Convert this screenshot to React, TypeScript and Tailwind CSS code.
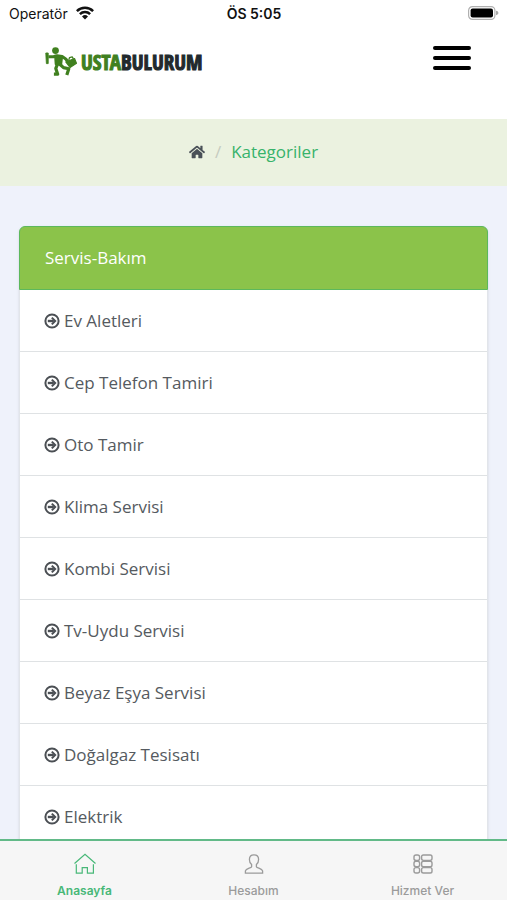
import { FaHome } from "react-icons/fa";

const categories = [
  "Ev Aletleri",
  "Cep Telefon Tamiri",
  "Oto Tamir",
  "Klima Servisi",
  "Kombi Servisi",
  "Tv-Uydu Servisi",
  "Beyaz Eşya Servisi",
  "Doğalgaz Tesisatı",
  "Elektrik",
];

function WifiIcon() {
  return (
    <svg viewBox="0 0 18 14" className="h-[14px] w-[18px]" aria-hidden="true">
      <g fill="none" stroke="#111" strokeWidth="2.5">
        <path d="M.9 5.100a11.400 11.400 0 0 1 16.200 0" />
        <path d="M3.900 8.200a7.200 7.200 0 0 1 10.200 0" />
      </g>
      <path d="M6 10.500a4.400 4.400 0 0 1 6 0L9 13.600z" fill="#111" />
    </svg>
  );
}

function BatteryIcon() {
  return (
    <svg viewBox="0 0 31 14" className="h-[14px] w-[31px]" aria-hidden="true">
      <rect x="0.6" y="0.6" width="26.300" height="12.800" rx="3.800" fill="#fff" stroke="#b0b0b0" strokeWidth="1.200" />
      <rect x="2.600" y="2.400" width="22.400" height="9.200" rx="2" fill="#000" />
      <path d="M28 4.800v4.400c1.600-.3 2.400-1.200 2.400-2.200S29.600 5.100 28 4.800z" fill="#a8a8a8" />
    </svg>
  );
}

function RunnerLogo() {
  return (
    <svg viewBox="0 0 32 30" className="h-[30px] w-8" aria-hidden="true">
      <circle cx="10.500" cy="3.600" r="3.400" fill="#40801f" />
      <g fill="#40801f" stroke="#40801f" strokeLinejoin="round">
        <path d="M.8 6h2.400v10.600H1.400z" strokeWidth=".9" />
        <path d="M3.400 9.700h5l3.600-.9 5.200.8 3.600 2.400 2.200 3" fill="none" strokeWidth="3" />
        <path d="M10 8.700l7.200 1.200-1 8-5.600-.6z" strokeWidth="1.800" />
        <path d="M12.600 16.800l-1.800 4.600 1.900 5.800H8.900" fill="none" strokeWidth="3.200" />
        <path d="M14.500 17l4 3.600 5.300 1.200-2 6.200" fill="none" strokeWidth="3.200" />
        <path d="M20.800 15l8.700-3.500 2 4.800-6.500 4.200z" strokeWidth="1.200" />
        <path d="M23.800 13l.7-2.400 2.700-.8 1.200 2" fill="none" strokeWidth="1.300" />
      </g>
    </svg>
  );
}

function CircleArrowIcon() {
  return (
    <svg viewBox="0 0 16 16" className="size-4 shrink-0" fill="none" stroke="#4b4f54" aria-hidden="true">
      <circle cx="8" cy="8" r="6.600" strokeWidth="2" />
      <path d="M3.800 8h6" strokeWidth="2.400" />
      <path d="M7.800 4.600L11.200 8l-3.400 3.400" strokeWidth="2" />
    </svg>
  );
}

function HouseIcon() {
  return (
    <svg viewBox="0 0 24 24" className="size-6" fill="none" stroke="currentColor" strokeWidth="1.200" aria-hidden="true">
      <path d="M1.500 11.500L12 2.300l10.500 9.200M3.300 12.300v8.900h5.900v-5.500h5.200v5.500h6V12.300" />
    </svg>
  );
}

function UserIcon() {
  return (
    <svg viewBox="0 0 24 24" className="size-6" fill="none" stroke="currentColor" strokeWidth="1.300" aria-hidden="true">
      <path d="M12 2.800c-3 0-4.600 2-4.600 4.600 0 2.300.9 4 2.200 5.100v2.200c-.5 1.500-5.600 1.700-6.200 4.200v2.200h17.200v-2.200c-.6-2.500-5.700-2.700-6.200-4.200v-2.200c1.300-1.100 2.200-2.800 2.200-5.100 0-2.600-1.600-4.600-4.600-4.600z" />
    </svg>
  );
}

function GridIcon() {
  return (
    <svg viewBox="0 0 24 24" className="size-6" fill="none" stroke="currentColor" strokeWidth="1.400" aria-hidden="true">
      {[3, 9.3, 15.6].map((y) => (
        <g key={y}>
          <rect x="3" y={y} width="5.600" height="5.400" rx="2" />
          <rect x="10.600" y={y} width="10.400" height="5.400" rx="1.800" />
        </g>
      ))}
    </svg>
  );
}

const tabs = [
  { label: "Anasayfa", icon: HouseIcon, active: true },
  { label: "Hesabım", icon: UserIcon, active: false },
  { label: "Hizmet Ver", icon: GridIcon, active: false },
];

export default function App() {
  return (
    <div className="flex h-screen flex-col overflow-hidden bg-[#eff2fb] font-['Open_Sans',sans-serif]">
      <div className="grid h-7 shrink-0 grid-cols-3 items-center bg-white pr-2 pb-0.5 pl-[9px] font-['Inter',sans-serif] text-[14px] text-[#111]">
        <div className="flex items-center gap-2">
          <span>Operatör</span>
          <WifiIcon />
        </div>
        <span className="text-center font-semibold">ÖS 5:05</span>
        <div className="flex justify-end">
          <BatteryIcon />
        </div>
      </div>

      <header className="flex h-[91px] shrink-0 items-start justify-between bg-white pt-4 pr-9 pl-[45px]">
        <a href="#" className="flex items-center gap-1 pt-0.5" aria-label="Ustabulurum">
          <RunnerLogo />
          <span className="font-['Open_Sans_Condensed','Roboto_Condensed','Liberation_Sans',sans-serif] text-[21px] leading-8 font-bold text-[#22292d] [-webkit-text-stroke:1px_currentColor]">
            <span className="text-[#40801f]">USTA</span>BULURUM
          </span>
        </a>
        <button aria-label="Menü" className="flex w-[38px] flex-col gap-[6px] pt-[2px]">
          <span className="h-1 w-full rounded-sm bg-black" />
          <span className="h-1 w-full rounded-sm bg-black" />
          <span className="h-1 w-full rounded-sm bg-black" />
        </button>
      </header>

      <main className="flex-1 overflow-y-auto [scrollbar-width:none]">
        <nav className="flex h-[67px] items-center justify-center gap-2.5 bg-[#ebf2e0] pb-0.5 text-[17px]">
          <a href="#" aria-label="Anasayfa" className="text-[#495057]">
            <FaHome size={16} />
          </a>
          <span className="text-[#c5cbbf]">/</span>
          <a href="#" className="text-[#37b36b]">Kategoriler</a>
        </nav>

        <section className="mx-[19px] mt-10 rounded-md shadow-sm">
          <h2 className="flex h-16 items-center rounded-t-md border border-[#5cb85c] bg-[#8bc34a] px-[25px] text-[17px] text-white">
            Servis-Bakım
          </h2>
          <ul className="border-x border-[#e2e5ea] bg-white">
            {categories.map((name) => (
              <li key={name} className="border-b border-[#dfe2e4]">
                <a href="#" className="flex h-[61px] items-center gap-1 px-6 text-[17px] text-[#555a60]">
                  <CircleArrowIcon />
                  {name}
                </a>
              </li>
            ))}
          </ul>
        </section>
      </main>

      <nav className="grid h-[61px] shrink-0 grid-cols-3 border-t-2 border-[#62ba88] bg-[#f6f6f6] font-['Inter',sans-serif] text-[12px]">
        {tabs.map(({ label, icon: Icon, active }) => (
          <a
            key={label}
            href="#"
            className={`flex flex-col items-center gap-[7px] pt-[11px] ${active ? "font-semibold text-[#48b878]" : "font-medium text-[#9b9b9b]"}`}
          >
            <Icon />
            <span className="leading-4">{label}</span>
          </a>
        ))}
      </nav>
    </div>
  );
}
